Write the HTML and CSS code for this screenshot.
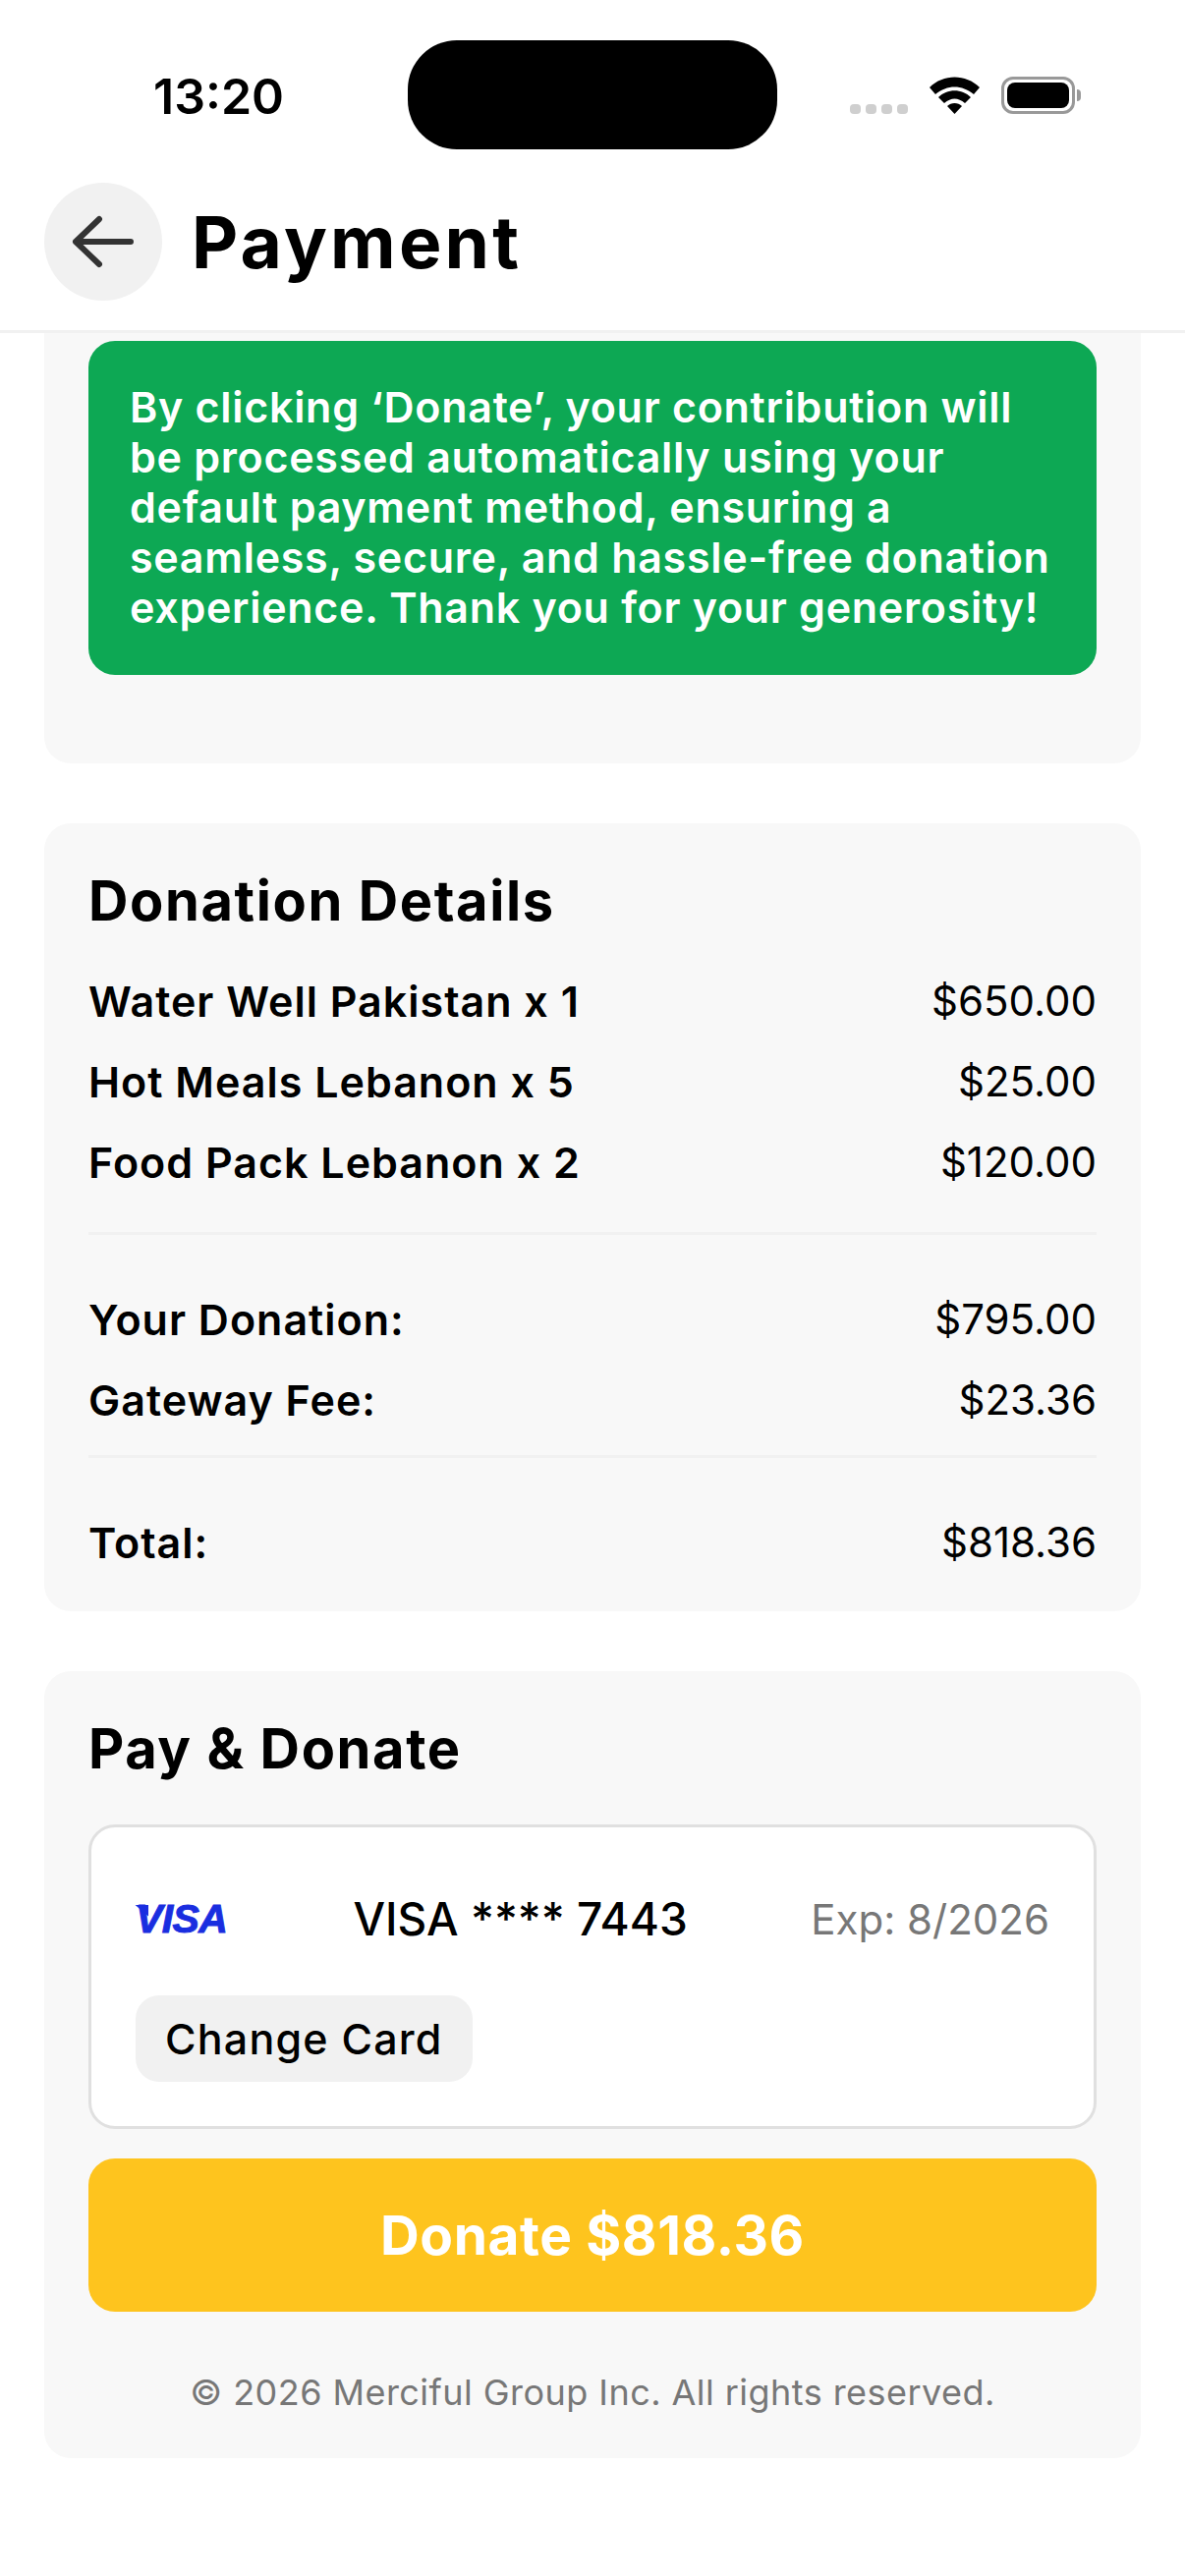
FILE: index.html
```html
<!DOCTYPE html>
<html lang="en">
<head>
    <meta charset="UTF-8">
    <meta name="viewport" content="width=device-width, initial-scale=1.0">
    <title>Payment</title>
    <link rel="stylesheet" href="styles.css">
</head>
<body>
    <div class="status-bar">
        <span class="time">13:20</span>
        <div class="island"></div>
        <div class="status-icons">
            <div class="signal"><i></i><i></i><i></i><i></i></div>
            <svg class="wifi" width="51" height="38" viewBox="0 0 51 38">
                <path d="M0 11 C14 -3 37 -3 51 11 L45 18 C33 8 18 8 6 18 Z" fill="#000"/>
                <path d="M9 21 C18 12 33 12 42 21 L36 27 C29 21 22 21 15 27 Z" fill="#000"/>
                <path d="M18 30 C22 26 29 26 33 30 L25.5 38 Z" fill="#000"/>
            </svg>
            <div class="battery"><div class="battery-fill"></div></div>
        </div>
    </div>

    <header class="top-bar">
        <button class="back-btn">
            <svg width="64" height="54" viewBox="0 0 64 54" fill="none" stroke="#333" stroke-width="6" stroke-linecap="round" stroke-linejoin="round">
                <path d="M60 27 H4 M28 4 L4 27 L28 50"/>
            </svg>
        </button>
        <h1>Payment</h1>
    </header>

    <main class="content">
        <section class="card card-notice">
            <p class="notice">By clicking ‘Donate’, your contribution will be processed automatically using your default payment method, ensuring a seamless, secure, and hassle-free donation experience. Thank you for your generosity!</p>
        </section>

        <section class="card card-details">
            <h2>Donation Details</h2>
            <div class="rows">
                <div class="row"><span>Water Well Pakistan x 1</span><span class="amount">$650.00</span></div>
                <div class="row"><span>Hot Meals Lebanon x 5</span><span class="amount">$25.00</span></div>
                <div class="row"><span>Food Pack Lebanon x 2</span><span class="amount">$120.00</span></div>
            </div>
            <div class="rows rows-split">
                <div class="row"><span>Your Donation:</span><span class="amount">$795.00</span></div>
                <div class="row"><span>Gateway Fee:</span><span class="amount">$23.36</span></div>
            </div>
            <div class="rows rows-split rows-total">
                <div class="row"><span>Total:</span><span class="amount">$818.36</span></div>
            </div>
        </section>

        <section class="card card-pay">
            <h2>Pay &amp; Donate</h2>
            <div class="pay-card">
                <div class="pay-top">
                    <span class="visa">VISA</span>
                    <span class="card-num">VISA **** 7443</span>
                    <span class="card-exp">Exp: 8/2026</span>
                </div>
                <button class="change-btn">Change Card</button>
            </div>
            <button class="donate-btn">Donate $818.36</button>
            <p class="copyright">© 2026 Merciful Group Inc. All rights reserved.</p>
        </section>
    </main>
</body>
</html>
```

FILE: styles.css
```css
body {
    margin: 0;
    width: 1206px;
    height: 2622px;
    overflow: hidden;
    background-color: #ffffff;
    font-family: "Inter", "Noto Sans", sans-serif;
    color: #000;
}

.status-bar {
    height: 186px;
    box-sizing: border-box;
    padding: 41px 0 0 156px;
    display: flex;
    align-items: flex-start;
}

.time {
    font-size: 50px;
    font-weight: 600;
    line-height: 58px;
    margin-top: 28px;
    width: 259px;
}

.island {
    width: 376px;
    height: 111px;
    background-color: #000;
    border-radius: 50px;
}

.status-icons {
    display: flex;
    align-items: center;
    gap: 22px;
    margin-top: 37px;
    margin-left: 74px;
}

.signal {
    display: flex;
    gap: 5px;
    align-self: flex-end;
}

.signal i {
    width: 11px;
    height: 10px;
    border-radius: 4px;
    background-color: #cfcfcf;
}

.battery {
    width: 75px;
    height: 38px;
    box-sizing: border-box;
    border: 3px solid #999;
    border-radius: 12px;
    padding: 3px;
    position: relative;
}

.battery::after {
    content: "";
    position: absolute;
    right: -9px;
    top: 10px;
    width: 4px;
    height: 12px;
    background-color: #999;
    border-radius: 0 4px 4px 0;
}

.battery-fill {
    height: 100%;
    background-color: #000;
    border-radius: 8px;
}

.top-bar {
    height: 153px;
    box-sizing: border-box;
    padding: 0 45px 30px;
    display: flex;
    align-items: center;
    gap: 30px;
    border-bottom: 3px solid #f1f1f1;
}

.back-btn {
    width: 120px;
    height: 120px;
    flex: none;
    padding: 0;
    border: none;
    border-radius: 50%;
    background-color: #f1f1f1;
    display: flex;
    align-items: center;
    justify-content: center;
}

h1 {
    margin: 0;
    font-size: 73px;
    font-weight: 700;
    letter-spacing: 3.2px;
}

.content {
    padding: 0 45px;
    display: flex;
    flex-direction: column;
    gap: 61px;
}

.card {
    background-color: #f8f8f8;
    border-radius: 27px;
    padding: 0 45px;
}

.card-notice {
    border-radius: 0 0 27px 27px;
    padding-top: 8px;
    padding-bottom: 90px;
}

.notice {
    margin: 0;
    background-color: #0da854;
    color: #fff;
    border-radius: 27px;
    padding: 42px 42px 43px;
    font-size: 43px;
    font-weight: 600;
    line-height: 51px;
    letter-spacing: 0.7px;
}

h2 {
    margin: 0;
    font-size: 56px;
    font-weight: 700;
    line-height: 64px;
    letter-spacing: 1.6px;
}

.card-details {
    padding-top: 47px;
    padding-bottom: 45px;
}

.rows {
    margin-top: 45px;
    display: flex;
    flex-direction: column;
    gap: 32px;
}

.rows-split {
    margin-top: 46px;
    padding-top: 61px;
    border-top: 3px solid #f1f1f1;
}

.rows-total {
    margin-top: 31px;
}

.row {
    display: flex;
    justify-content: space-between;
    font-size: 43px;
    line-height: 50px;
    font-weight: 600;
    letter-spacing: 1px;
}

.amount {
    font-size: 42px;
    font-weight: 400;
    letter-spacing: 0;
}

.card-pay {
    padding-top: 47px;
    padding-bottom: 45px;
}

.pay-card {
    margin-top: 45px;
    height: 310px;
    box-sizing: border-box;
    background-color: #fff;
    border: 3px solid #e0e0e0;
    border-radius: 27px;
    padding: 63px 45px 0;
}

.pay-top {
    display: flex;
    align-items: center;
    justify-content: space-between;
    height: 60px;
}

.visa {
    width: 96px;
    position: relative;
    font-family: "Liberation Sans", sans-serif;
    font-size: 41px;
    font-weight: 700;
    font-style: italic;
    letter-spacing: -0.6px;
    color: #1a2ee0;
    -webkit-text-stroke: 1px #1a2ee0;
}

/* little flare on the V of the logo */
.visa::before {
    content: "";
    position: absolute;
    left: -1px;
    top: 9px;
    width: 14px;
    height: 12px;
    background-color: #1a2ee0;
    clip-path: polygon(0 0, 100% 0, 100% 100%);
}

.card-num {
    font-size: 46px;
    font-weight: 500;
}

.card-exp {
    font-size: 42px;
    color: #777;
}

.change-btn {
    display: block;
    margin-top: 48px;
    height: 88px;
    padding: 0 30px;
    border: none;
    border-radius: 24px;
    background-color: #f1f1f1;
    color: #000;
    font-family: inherit;
    font-size: 43px;
    font-weight: 500;
    letter-spacing: 1.2px;
}

.donate-btn {
    display: block;
    width: 100%;
    height: 156px;
    margin-top: 30px;
    border: none;
    border-radius: 27px;
    background-color: #fec41e;
    color: #fff;
    font-family: inherit;
    font-size: 55px;
    font-weight: 700;
    letter-spacing: 0.6px;
}

.copyright {
    margin: 60px 0 0;
    text-align: center;
    font-size: 36px;
    line-height: 44px;
    color: #777;
    letter-spacing: 0.45px;
}
```
